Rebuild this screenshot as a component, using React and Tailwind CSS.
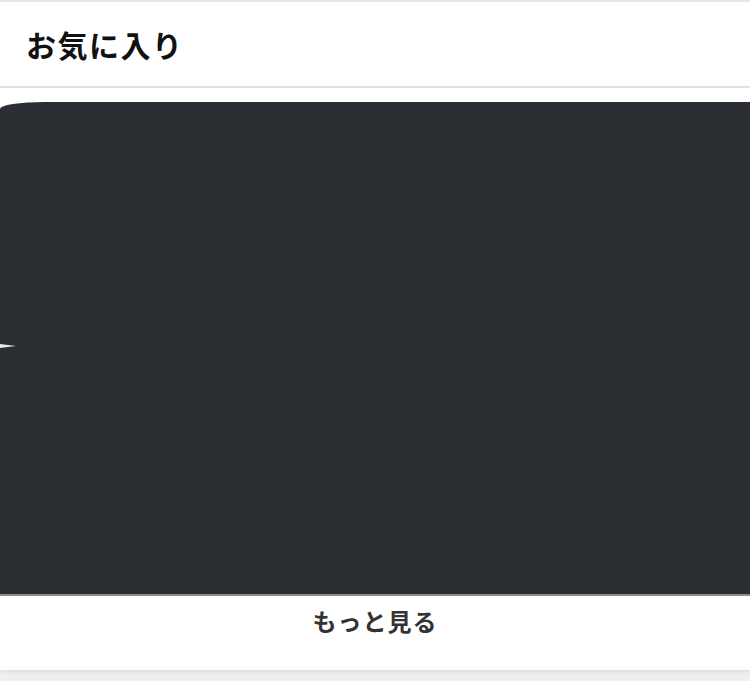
export default function App() {
  return (
    <div className="w-[750px] h-[681px] overflow-hidden bg-[#efefef]" style={{ fontFamily: '"Noto Sans CJK JP", "Noto Sans", sans-serif' }}>
      <section className="bg-white border-t-2 border-[#e6e6e6] shadow-[0_2px_4px_rgba(0,0,0,0.08)]">
        <header className="h-[86px] flex items-center px-[26px] border-b-2 border-[#e2e2e2]">
          <h2 className="text-[30px] font-bold text-[#111] tracking-[1.5px]">お気に入り</h2>
        </header>
        <div className="pt-[14px] overflow-hidden">
          <div className="relative h-[494px] w-[760px] bg-[#2b2f33] rounded-tl-[44px_7px] border-b-2 border-[#8a8d90]">
            <svg className="absolute left-0 top-[241px]" width="16" height="6" viewBox="0 0 16 6">
              <polygon points="0,1 16,3 0,5" fill="#e8e8e8" />
            </svg>
          </div>
        </div>
        <div className="h-[74px] flex justify-center pt-[7px]">
          <span className="text-[24px] font-bold text-[#333] tracking-[1px]">もっと見る</span>
        </div>
      </section>
    </div>
  );
}
